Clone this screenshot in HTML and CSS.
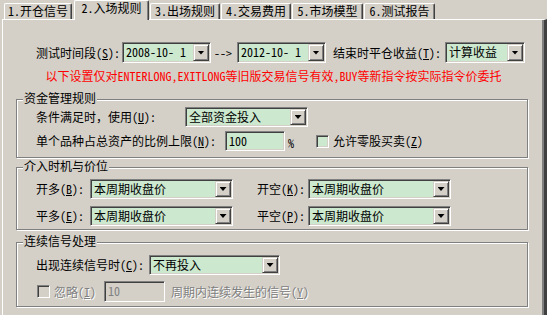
FILE: index.html
```html
<!DOCTYPE html>
<html lang="zh-CN">
<head>
  <meta charset="UTF-8">
  <title>入场规则</title>
  <link rel="stylesheet" href="styles.css">
</head>
<body>

  <!-- Tab strip -->
  <div class="tabs">
    <div class="tab first">1.开仓信号</div>
    <div class="tab active">2.入场规则</div>
    <div class="tab">3.出场规则</div>
    <div class="tab">4.交易费用</div>
    <div class="tab wide">5.市场模型</div>
    <div class="tab wide">6.测试报告</div>
  </div>

  <!-- Page: 入场规则 -->
  <div class="panel">
    <div class="row top-row">
      <span class="lbl w-period">测试时间段(<u>S</u>):</span>
      <div class="combo tall w-date"><span class="val">2008-10- 1</span><span class="drop"></span></div>
      <span class="arrow">--&gt;</span>
      <div class="combo tall w-date"><span class="val">2012-10- 1</span><span class="drop"></span></div>
      <span class="lbl w-close">结束时平仓收益(<u>T</u>):</span>
      <div class="combo tall w-profit"><span class="val">计算收益</span><span class="drop"></span></div>
    </div>

    <p class="notice">以下设置仅对ENTERLONG,EXITLONG等旧版交易信号有效,BUY等新指令按实际指令价委托</p>

    <div class="group g-money">
      <span class="group-title">资金管理规则</span>
      <div class="row">
        <span class="lbl w-use">条件满足时，使用(<u>U</u>):</span>
        <div class="combo w-fund"><span class="val">全部资金投入</span><span class="drop"></span></div>
      </div>
      <div class="row">
        <span class="lbl w-ratio">单个品种占总资产的比例上限(<u>N</u>):</span>
        <div class="edit w-pct"><span class="val">100</span></div>
        <span class="pct">%</span>
        <span class="check odd-lot"></span>
        <span class="check-lbl">允许零股买卖(<u>Z</u>)</span>
      </div>
    </div>

    <div class="group g-entry">
      <span class="group-title">介入时机与价位</span>
      <div class="row">
        <span class="lbl w-side">开多(<u>B</u>):</span>
        <div class="combo w-price"><span class="val">本周期收盘价</span><span class="drop"></span></div>
        <span class="lbl w-side2">开空(<u>K</u>):</span>
        <div class="combo w-price"><span class="val">本周期收盘价</span><span class="drop"></span></div>
      </div>
      <div class="row">
        <span class="lbl w-side">平多(<u>E</u>):</span>
        <div class="combo w-price"><span class="val">本周期收盘价</span><span class="drop"></span></div>
        <span class="lbl w-side2">平空(<u>P</u>):</span>
        <div class="combo w-price"><span class="val">本周期收盘价</span><span class="drop"></span></div>
      </div>
    </div>

    <div class="group g-signal">
      <span class="group-title">连续信号处理</span>
      <div class="row">
        <span class="lbl w-repeat">出现连续信号时(<u>C</u>):</span>
        <div class="combo w-repeat-box"><span class="val">不再投入</span><span class="drop"></span></div>
      </div>
      <div class="row tall-row">
        <span class="check disabled ignore"></span>
        <span class="lbl dim w-ignore">忽略(<u>I</u>)</span>
        <div class="edit disabled w-count"><span class="val">10</span></div>
        <span class="dim period-txt">周期内连续发生的信号(<u>Y</u>)</span>
      </div>
    </div>
  </div>

</body>
</html>
```

FILE: styles.css
```css
/* Global */
* {
  box-sizing: border-box;
}
body {
  margin: 0;
  width: 547px;
  height: 315px;
  overflow: hidden;
  background: #d4d0c8;
  color: #000;
  font-family: "Noto Sans Mono CJK SC", "Noto Sans CJK SC", sans-serif;
  font-size: 12px;
  line-height: 14px;
}
u {
  text-decoration-thickness: 1px;
}

/* Tabs */
.tabs {
  display: flex;
  align-items: flex-end;
  height: 19px;
  padding-left: 4px;
}
.tab {
  position: relative;
  width: 70px;
  height: 16px;
  margin-left: 1px;
  border-top: 1px solid #fff;
  border-left: 1px solid #fff;
  border-right: 1px solid #404040;
  border-radius: 2px 2px 0 0;
  box-shadow: inset -1px 0 #808080;
  text-align: center;
  white-space: nowrap;
}
.tab.first {
  width: 68px;
  margin-left: 0;
}
.tab.wide {
  width: 71px;
}
.tab.active {
  z-index: 1;
  width: 75px;
  height: 20px;
  margin: 0 0 -1px 2px;
  background: #d4d0c8;
}

/* Tab page */
.panel {
  height: 310px;
  margin-left: 2px;
  padding-top: 22px;
  border-top: 1px solid #fff;
  border-left: 1px solid #fff;
  border-right: 3px solid #404040;
  box-shadow: inset -2px 0 #808080;
}
.row {
  display: flex;
  align-items: center;
  height: 20px;
}
.top-row {
  height: 21px;
  padding-left: 33px;
}
.tall-row {
  height: 21px;
}
.lbl {
  flex: none;
  white-space: nowrap;
}
.notice {
  margin: 6px 0 0;
  color: #f00;
  text-align: center;
  white-space: nowrap;
}

/* Combo boxes and edits */
.combo,
.edit {
  display: flex;
  flex: none;
  height: 20px;
  padding: 1px;
  background: #cce8cf;
  border: 1px solid;
  border-color: #808080 #fff #fff #808080;
  box-shadow: inset 1px 1px #404040, inset -1px -1px #d4d0c8;
}
.combo.tall {
  height: 21px;
}
.val {
  flex: 1;
  padding-left: 2px;
  line-height: 16px;
  white-space: pre;
}
.drop {
  display: flex;
  align-items: center;
  justify-content: center;
  width: 16px;
  background: #d4d0c8;
  border: 1px solid;
  border-color: #d4d0c8 #404040 #404040 #d4d0c8;
  box-shadow: inset 1px 1px #fff, inset -1px -1px #808080;
}
.drop::after {
  content: "";
  width: 7px;
  height: 4px;
  background: #000;
  clip-path: polygon(0 0, 100% 0, 50% 100%);
}
.edit.disabled {
  background: #d4d0c8;
  color: #808080;
}
.check {
  flex: none;
  width: 13px;
  height: 13px;
  background: #cce8cf;
  border: 1px solid;
  border-color: #808080 #fff #fff #808080;
  box-shadow: inset 1px 1px #404040, inset -1px -1px #d4d0c8;
}
.check.disabled {
  background: #d4d0c8;
}
.dim {
  color: #808080;
  text-shadow: 1px 1px 0 #fff;
}

/* Widths / spacing of the single controls */
.w-period { width: 86px; }
.w-date { width: 89px; }
.arrow {
  width: 18px;
  margin: 0 5px 0 3px;
}
.w-close {
  width: 112px;
  margin-left: 7px;
}
.w-profit { width: 80px; }

/* Group boxes */
.group {
  position: relative;
  display: flex;
  flex-direction: column;
  width: 512px;
  margin-left: 13px;
  padding-left: 19px;
  border: 1px solid #808080;
  box-shadow: inset 1px 1px #fff, 1px 1px #fff;
}
.group-title {
  position: absolute;
  top: -9px;
  left: 6px;
  padding: 0 1px;
  background: #d4d0c8;
}
.g-money {
  gap: 4px;
  margin-top: 16px;
  padding-top: 7px;
  padding-bottom: 6px;
}
.g-entry {
  gap: 7px;
  margin-top: 9px;
  padding-top: 11px;
  padding-bottom: 3px;
}
.g-signal {
  gap: 6px;
  margin-top: 12px;
  padding-top: 12px;
  padding-bottom: 4px;
}

.w-use { width: 149px; }
.w-fund { width: 123px; }
.w-ratio { width: 189px; }
.w-pct { width: 60px; }
.pct {
  margin: 3px 0 0 3px;
}
.odd-lot {
  margin-left: 22px;
}
.check-lbl {
  margin-left: 4px;
}

.w-side { width: 54px; }
.w-price { width: 143px; }
.w-side2 {
  width: 51px;
  margin-left: 24px;
}

.w-repeat { width: 113px; }
.w-repeat-box { width: 131px; }
.ignore {
  margin-left: 1px;
}
.w-ignore {
  width: 50px;
  margin-left: 4px;
}
.w-count {
  width: 61px;
  height: 21px;
}
.period-txt {
  margin-left: 6px;
}
```
